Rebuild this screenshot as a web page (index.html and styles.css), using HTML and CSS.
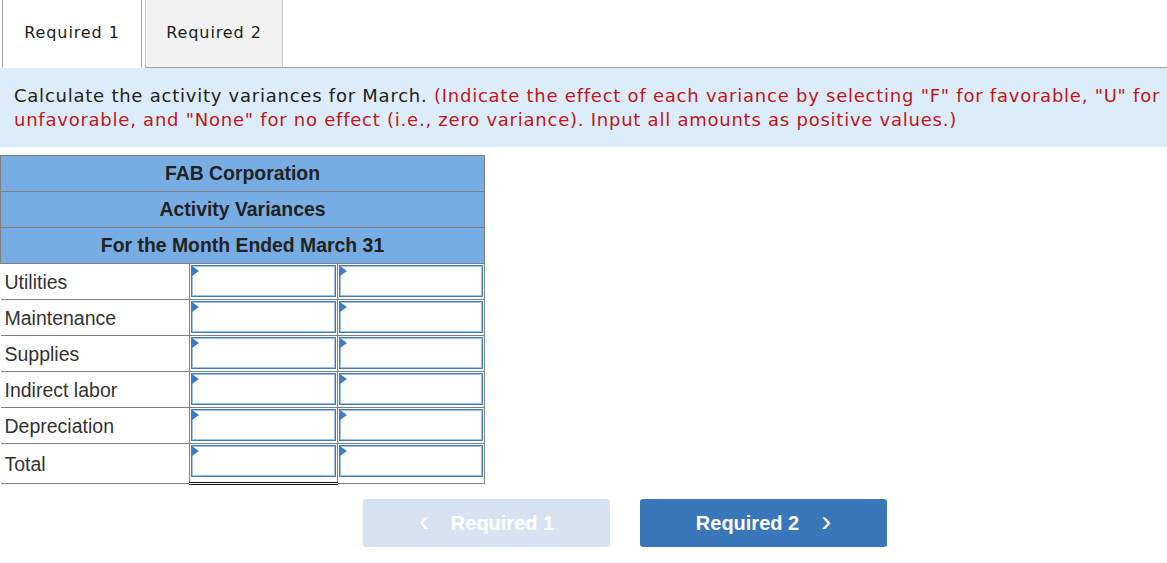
FILE: index.html
```html
<!DOCTYPE html>
<html>
<head>
<meta charset="utf-8">
<link rel="stylesheet" href="styles.css">
</head>
<body>
<div class="tabs">
  <div class="tab active">Required 1</div>
  <div class="tab">Required 2</div>
  <div class="tab-fill"></div>
</div>
<div class="instr">
  Calculate the activity variances for March. <span class="red">(Indicate the effect of each variance by selecting "F" for favorable, "U" for unfavorable, and "None" for no effect (i.e., zero variance). Input all amounts as positive values.)</span>
</div>
<table class="sheet">
  <tr><th colspan="3">FAB Corporation</th></tr>
  <tr><th colspan="3">Activity Variances</th></tr>
  <tr><th colspan="3">For the Month Ended March 31</th></tr>
  <tr><td class="lbl">Utilities</td><td class="in"><div class="box"></div></td><td class="in"><div class="box"></div></td></tr>
  <tr><td class="lbl">Maintenance</td><td class="in"><div class="box"></div></td><td class="in"><div class="box"></div></td></tr>
  <tr><td class="lbl">Supplies</td><td class="in"><div class="box"></div></td><td class="in"><div class="box"></div></td></tr>
  <tr><td class="lbl">Indirect labor</td><td class="in"><div class="box"></div></td><td class="in"><div class="box"></div></td></tr>
  <tr><td class="lbl">Depreciation</td><td class="in"><div class="box"></div></td><td class="in"><div class="box"></div></td></tr>
  <tr class="total"><td class="lbl">Total</td><td class="in dbl"><div class="box"></div></td><td class="in"><div class="box"></div></td></tr>
</table>
<div class="nav">
  <div class="btn prev"><span class="chev">&lsaquo;</span>Required 1</div>
  <div class="btn next">Required 2<span class="chev">&rsaquo;</span></div>
</div>
</body>
</html>
```
FILE: styles.css
```css
body {
  margin: 0;
  background: #fff;
  font-family: "DejaVu Sans", Verdana, sans-serif;
  color: #222;
}
.tabs {
  display: flex;
  height: 68px;
  padding-left: 2px;
}
.tab {
  width: 138px;
  border-left: 1px solid #a0a0a0;
  border-right: 1px solid #a0a0a0;
  border-bottom: 1px solid #a0a0a0;
  font-size: 16px;
  letter-spacing: 0.9px;
  line-height: 66px;
  text-align: center;
  color: #1a1a1a;
}
.tab.active {
  border-bottom: 1px solid #fff;
}
.tab + .tab {
  margin-left: 3px;
  width: 136px;
  background: #f2f2f2;
  border-left: 1px solid #c8c8c8;
  border-right: 1px solid #c8c8c8;
}
.tab-fill {
  flex: 1;
  border-bottom: 1px solid #a0a0a0;
}
.instr {
  background: #dcecf9;
  padding: 16px 6px 15px 14px;
  font-size: 18px;
  letter-spacing: 0.76px;
  line-height: 24px;
  color: #222;
}
.red { color: #c0151c; }
.sheet {
  margin-top: 8px;
  border-collapse: collapse;
  width: 485px;
  font-family: "Liberation Sans", Arial, sans-serif;
}
.sheet th {
  background: #78ade4;
  border: 1px solid #7f7f7f;
  height: 35px;
  padding: 0;
  font-size: 19.4px;
  font-weight: bold;
  color: #222;
  text-align: center;
}
.sheet td {
  border-top: 1px solid #7f7f7f;
  border-bottom: 1px solid #7f7f7f;
  height: 34px;
  padding: 0;
}
.sheet td.lbl {
  width: 185px;
  padding-left: 4px;
  font-size: 19.5px;
  line-height: 22px;
  color: #333;
  border-right: 1px solid #7f7f7f;
}
.sheet td.in {
  width: 146px;
  border-right: 1px solid #7f7f7f;
  vertical-align: top;
  padding: 1px 0 0 1px;
}
.sheet tr.total td { height: 37px; }
.sheet td.dbl { border-bottom: 3px double #111; }
.box {
  position: relative;
  height: 30px;
  margin-right: 1px;
  border: 1px solid #3f7bc1;
  box-shadow: inset 0 0 0 1px #9fc0e6;
  background: #fff;
}
.box::before {
  content: "";
  position: absolute;
  left: 0;
  top: 0;
  border-top: 5px solid transparent;
  border-bottom: 5px solid transparent;
  border-left: 7px solid #3f7bc1;
}
.nav {
  display: flex;
  gap: 30px;
  margin-top: 14px;
  padding-left: 363px;
}
.btn {
  width: 247px;
  height: 48px;
  border-radius: 3px;
  display: flex;
  align-items: center;
  justify-content: center;
  font-family: "Liberation Sans", Arial, sans-serif;
  font-weight: bold;
  font-size: 20px;
  color: #fff;
}
.prev { background: #d7e3f1; }
.next { background: #3a76ba; }
.chev {
  font-size: 30px;
  font-weight: normal;
  line-height: 1;
  position: relative;
  top: -2px;
}
.prev .chev { margin-right: 22px; }
.next .chev { margin-left: 22px; }
```
